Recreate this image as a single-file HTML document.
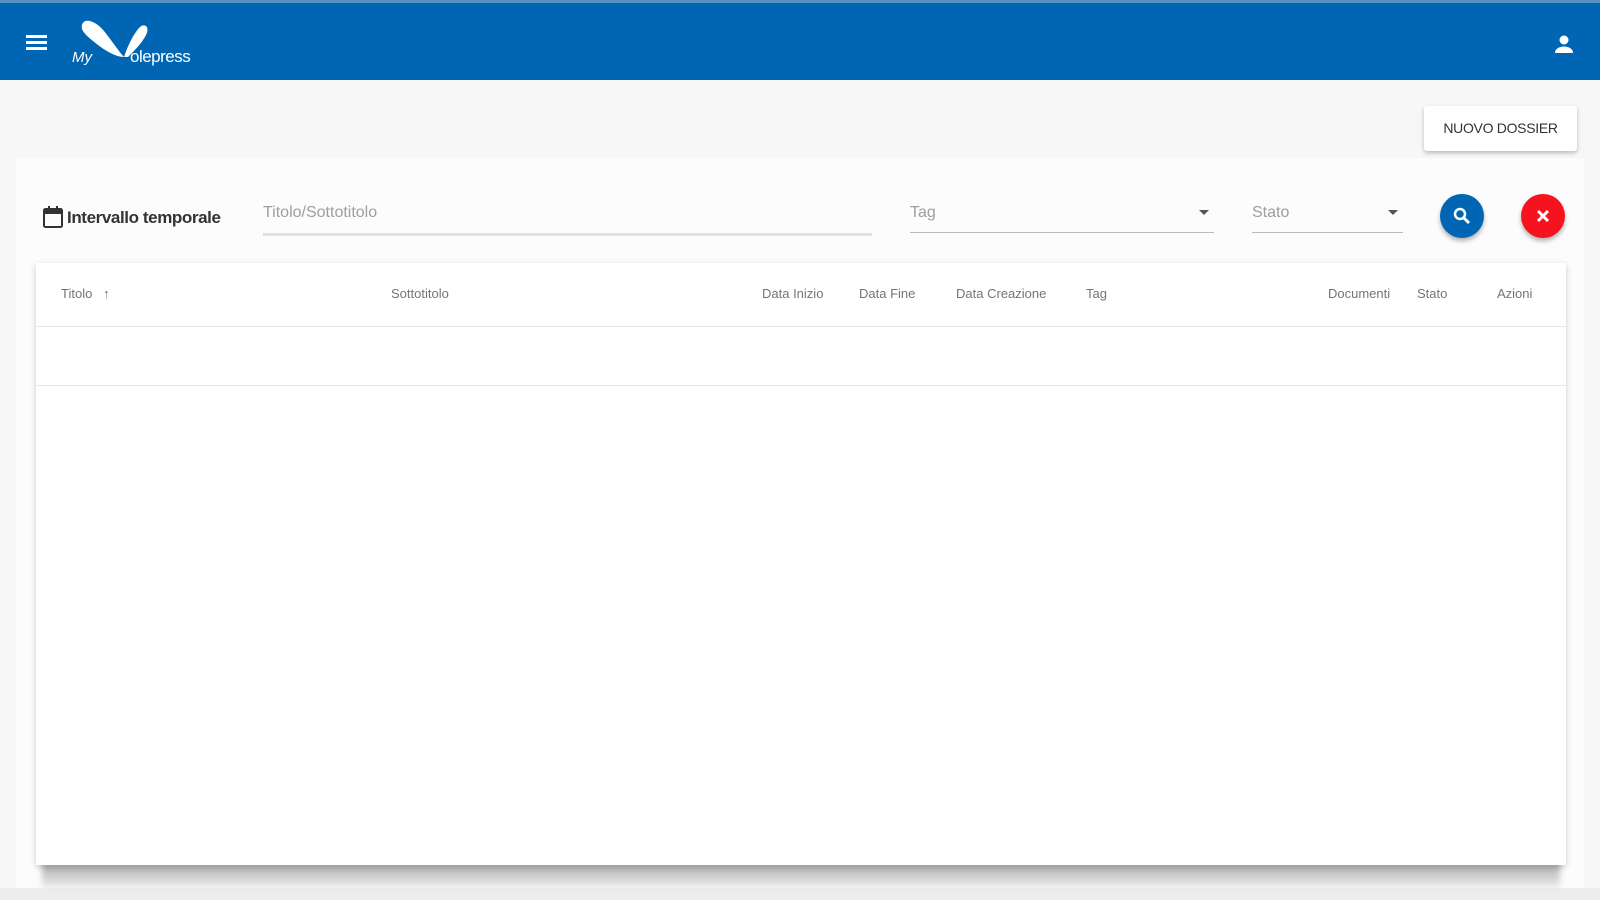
<!DOCTYPE html>
<html><head><style>
*{margin:0;padding:0;box-sizing:border-box}
body{width:1600px;height:900px;background:#f7f7f7;font-family:"Liberation Sans",sans-serif;position:relative;overflow:hidden}
.hdr{position:absolute;left:0;top:0;width:1600px;height:80px;background:#0066b3;border-top:3px solid #5a8fc4}
.abs{position:absolute}
.card{position:absolute;background:#fff}
.lbl{position:absolute;font-size:16px;color:#9e9e9e}
.th{position:absolute;top:286px;font-size:13px;color:#757575}
.ul{position:absolute;height:2px;background:#e0e0e0}
.caret{position:absolute;width:0;height:0;border-left:5px solid transparent;border-right:5px solid transparent;border-top:5px solid #555}
</style></head><body>
<div class="hdr">
 <div class="abs" style="left:26px;top:32px;width:21px;height:3px;background:#fff;box-shadow:0 6px 0 #fff,0 12px 0 #fff"></div>
 <svg class="abs" style="left:70px;top:14px" width="135" height="52" viewBox="0 0 135 52">
  <path d="M12 8 C14 0 26 4 34 14 C42 24 50 36 54 40 C46 40 36 34 28 28 C18 20 10 14 12 8Z" fill="#fff"/>
  <path d="M54 40 C58 28 64 16 70 10 C75 6 80 10 76 18 C72 26 64 34 58 40Z" fill="#fff"/>
  <text x="2" y="45" font-size="15" fill="#fff" font-style="italic" font-family="Liberation Sans">My</text>
  <text x="60" y="45" font-size="17" fill="#fff" font-family="Liberation Sans" letter-spacing="-0.5">olepress</text>
 </svg>
 <svg class="abs" style="left:1552px;top:29px" width="24" height="24" viewBox="0 0 24 24"><circle cx="12" cy="8" r="4.5" fill="#fff"/><path d="M3 21c0-4 4-6.5 9-6.5s9 2.5 9 6.5z" fill="#fff"/></svg>
</div>
<div class="card" style="left:1424px;top:106px;width:153px;height:45px;border-radius:3px;box-shadow:0 2px 4px rgba(0,0,0,.25)"></div>
<div class="abs" style="left:1424px;top:120px;width:153px;text-align:center;font-size:14px;color:#333;letter-spacing:-.3px">NUOVO DOSSIER</div>
<div class="card" style="left:16px;top:158px;width:1568px;height:742px;background:#fcfcfc"></div>
<svg class="abs" style="left:42px;top:205px" width="22" height="24" viewBox="0 0 22 24"><rect x="2" y="4" width="18" height="18" rx="1.5" fill="none" stroke="#333" stroke-width="2"/><rect x="2" y="4" width="18" height="5" fill="#333"/><rect x="6" y="1" width="2" height="5" fill="#333"/><rect x="14" y="1" width="2" height="5" fill="#333"/></svg>
<div class="abs" style="left:67px;top:208px;font-size:17px;font-weight:bold;color:#333;letter-spacing:-.4px">Intervallo temporale</div>
<div class="lbl" style="left:263px;top:204px">Titolo/Sottotitolo</div>
<div class="ul" style="left:263px;top:233px;width:609px;height:3px"></div>
<div class="lbl" style="left:910px;top:204px">Tag</div>
<div class="caret" style="left:1199px;top:210px"></div>
<div class="ul" style="left:910px;top:232px;width:304px;background:#bbb;height:1px"></div>
<div class="lbl" style="left:1252px;top:204px">Stato</div>
<div class="caret" style="left:1388px;top:210px"></div>
<div class="ul" style="left:1252px;top:232px;width:151px;background:#bbb;height:1px"></div>
<div class="abs" style="left:1440px;top:194px;width:44px;height:44px;border-radius:50%;background:#0066b3;box-shadow:0 3px 5px rgba(0,0,0,.3)"></div>
<svg class="abs" style="left:1450px;top:204px" width="24" height="24" viewBox="0 0 24 24"><circle cx="10" cy="10" r="5" fill="none" stroke="#fff" stroke-width="2.5"/><path d="M14 14l5 5" stroke="#fff" stroke-width="3"/></svg>
<div class="abs" style="left:1521px;top:194px;width:44px;height:44px;border-radius:50%;background:#f5141e;box-shadow:0 3px 5px rgba(0,0,0,.3)"></div>
<svg class="abs" style="left:1531px;top:204px" width="24" height="24" viewBox="0 0 24 24"><path d="M7 7l10 10M17 7L7 17" stroke="#fff" stroke-width="3"/></svg>
<div class="abs" style="left:0;top:888px;width:1600px;height:12px;background:#ededed"></div>
<div class="abs" style="left:42px;top:862px;width:1518px;height:26px;background:linear-gradient(#a8a8a8,#cfcfcf 55%,#ececec);filter:blur(3px)"></div>
<div class="card" style="left:36px;top:263px;width:1530px;height:602px;box-shadow:0 2px 6px rgba(0,0,0,.2)"></div>
<div class="abs" style="left:36px;top:326px;width:1530px;height:1px;background:#e8e8e8"></div>
<div class="abs" style="left:36px;top:385px;width:1530px;height:1px;background:#e8e8e8"></div>
<div class="th" style="left:61px">Titolo &nbsp;&nbsp;&#8593;</div>
<div class="th" style="left:391px">Sottotitolo</div>
<div class="th" style="left:762px">Data Inizio</div>
<div class="th" style="left:859px">Data Fine</div>
<div class="th" style="left:956px">Data Creazione</div>
<div class="th" style="left:1086px">Tag</div>
<div class="th" style="left:1328px">Documenti</div>
<div class="th" style="left:1417px">Stato</div>
<div class="th" style="left:1497px">Azioni</div>
</body></html>
